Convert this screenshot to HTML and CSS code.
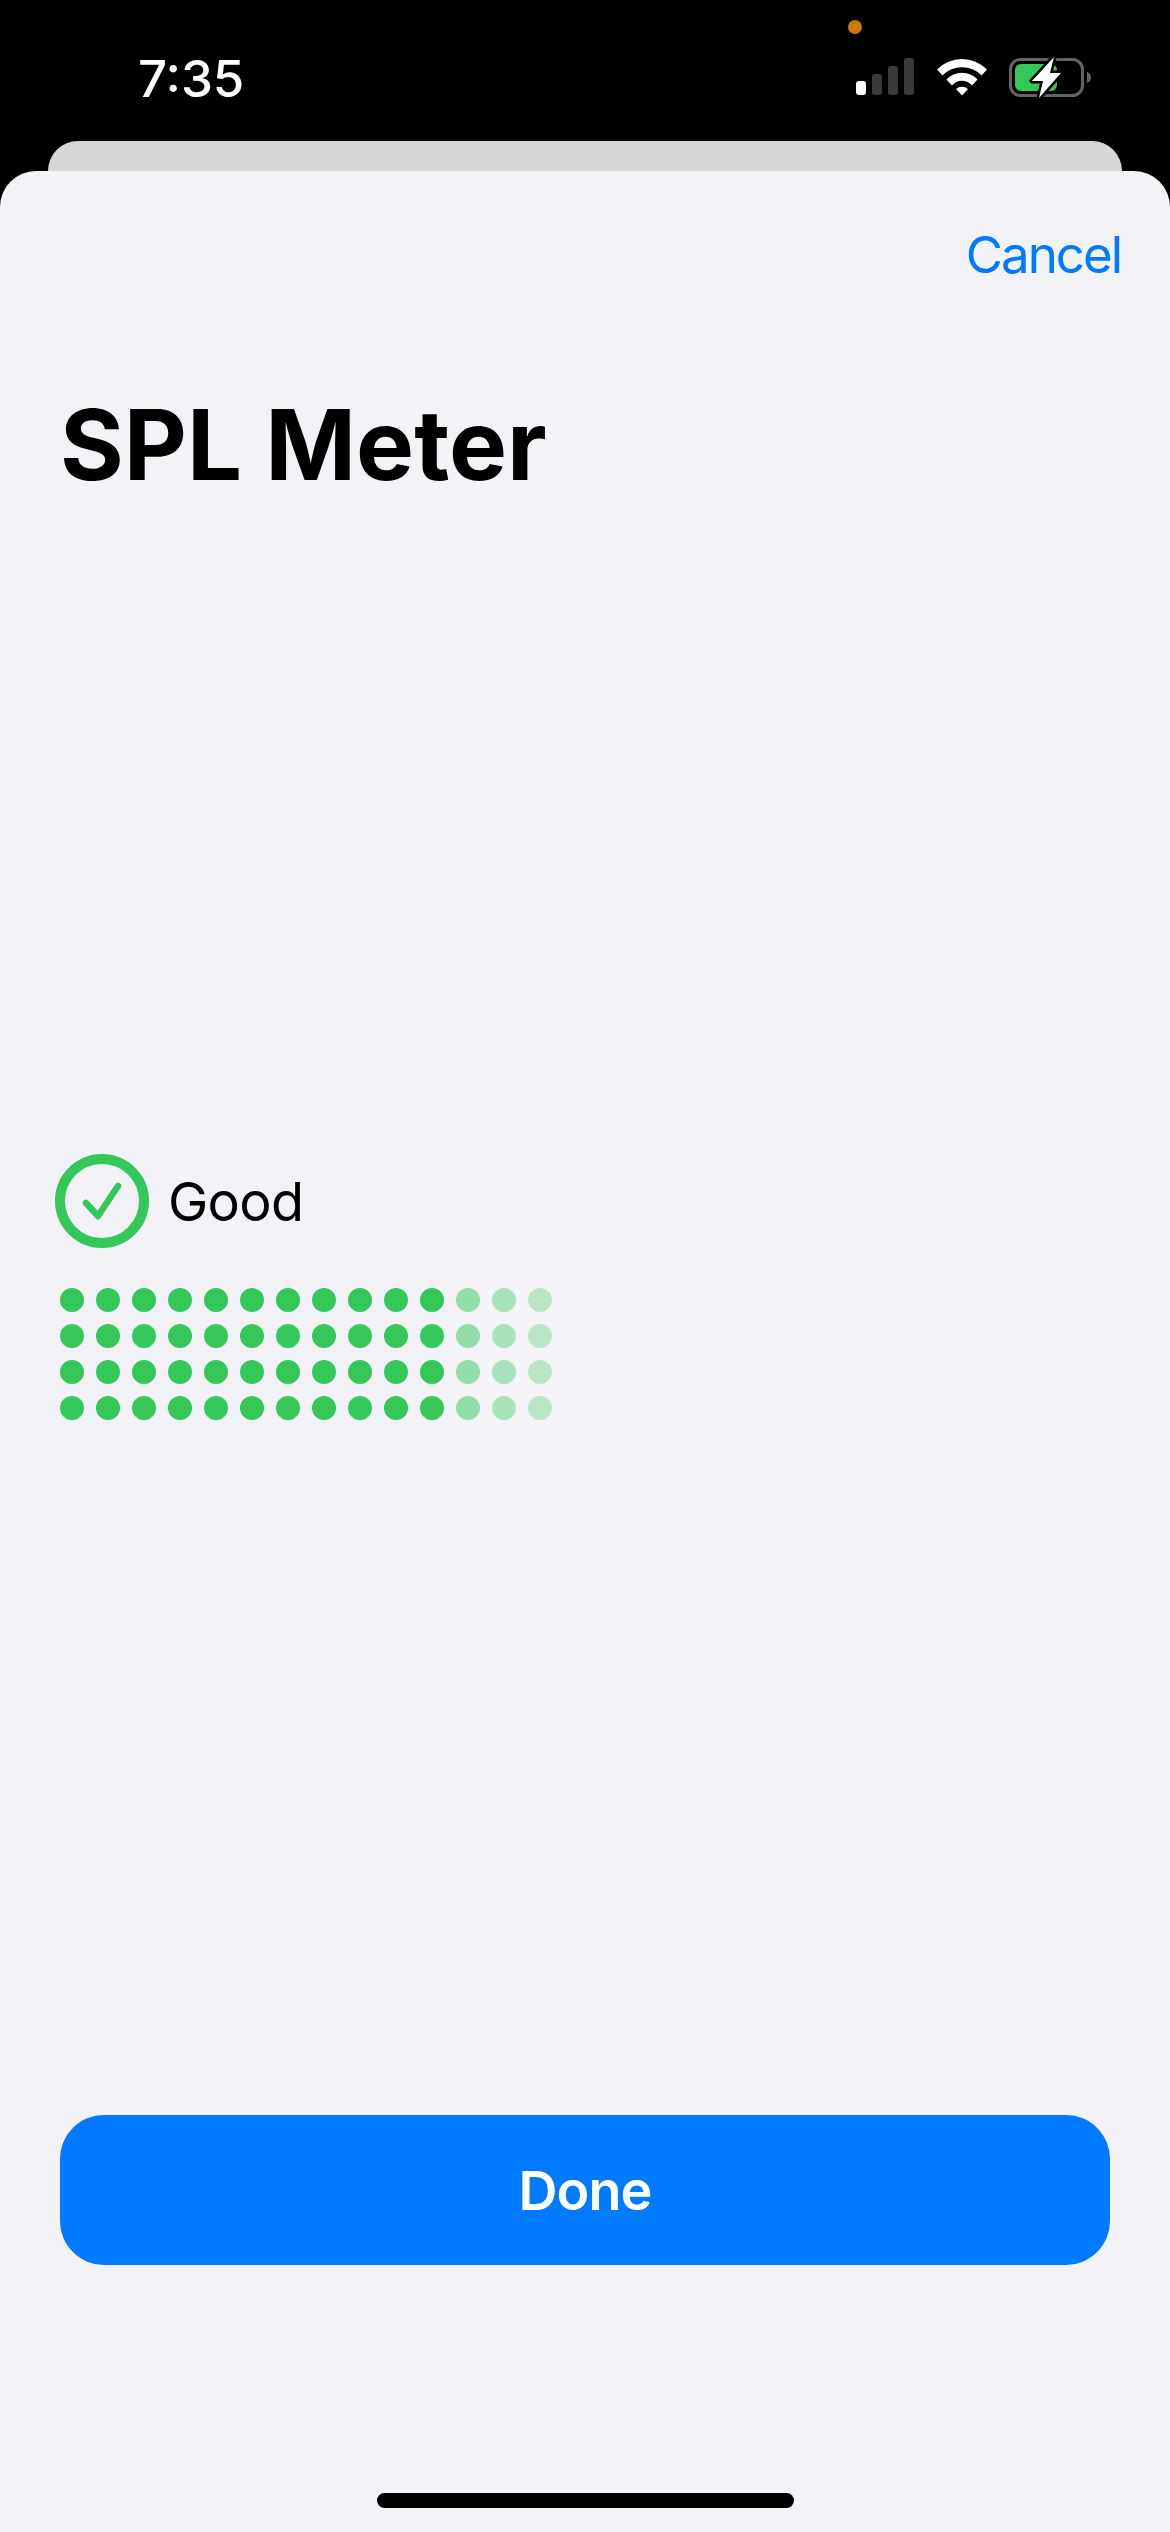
FILE: index.html
```html
<!DOCTYPE html>
<html lang="en">
<head>
	<meta charset="UTF-8">
	<title>SPL Meter</title>
	<link rel="stylesheet" href="styles.css">
</head>
<body>
	<div class="status-bar">
		<span class="time">7:35</span>
		<span class="mic-dot"></span>
		<svg class="status-icons" width="236" height="44" viewBox="0 0 236 44">
			<!-- signal -->
			<rect x="1" y="25" width="10" height="14" rx="3" fill="#fff"/>
			<rect x="17" y="18" width="10" height="21" rx="3" fill="#3a3a3c"/>
			<rect x="33" y="10" width="10" height="29" rx="3" fill="#3a3a3c"/>
			<rect x="49" y="2" width="10" height="37" rx="3" fill="#3a3a3c"/>
			<!-- wifi -->
			<path d="M82 13.500 A35 35 0 0 1 132 13.500 L126.500 19.500 A27 27 0 0 0 87.500 19.500 Z" fill="#fff"/>
			<path d="M91.500 23.500 A21 21 0 0 1 122.500 23.500 L117 29.500 A13 13 0 0 0 97 29.500 Z" fill="#fff"/>
			<path d="M101 33 A9 9 0 0 1 113 33 L107 39.500 Z" fill="#fff"/>
			<!-- battery -->
			<rect x="155.500" y="3.500" width="72" height="36" rx="10" fill="none" stroke="#636366" stroke-width="3"/>
			<rect x="160" y="8" width="42" height="27" rx="6" fill="#34c759"/>
			<path d="M232 16 C235 17 236 19 236 21.500 C236 24 235 26 232 27 Z" fill="#636366"/>
			<path d="M199 1 L177 25 L188 25 L184 42 L206 17 L195 17 Z" fill="#fff" stroke="#000" stroke-width="5" stroke-linejoin="round" paint-order="stroke"/>
		</svg>
	</div>
	<div class="back-sheet"></div>
	<div class="sheet">
		<div class="sheet-top">
			<span class="cancel">Cancel</span>
		</div>
		<h1 class="title">SPL Meter</h1>
		<div class="meter">
			<div class="meter-status">
				<svg class="check" width="94" height="94" viewBox="0 0 94 94">
					<circle cx="47" cy="47" r="42" fill="none" stroke="#34c759" stroke-width="10"/>
					<path d="M31 49 L43 62 L63 32" fill="none" stroke="#34c759" stroke-width="6.500" stroke-linecap="round" stroke-linejoin="round"/>
				</svg>
				<span class="meter-label">Good</span>
			</div>
			<div class="dots">
				<i></i><i></i><i></i><i></i><i></i><i></i><i></i><i></i><i></i><i></i><i></i><i class="fade1"></i><i class="fade2"></i><i class="fade3"></i>
				<i></i><i></i><i></i><i></i><i></i><i></i><i></i><i></i><i></i><i></i><i></i><i class="fade1"></i><i class="fade2"></i><i class="fade3"></i>
				<i></i><i></i><i></i><i></i><i></i><i></i><i></i><i></i><i></i><i></i><i></i><i class="fade1"></i><i class="fade2"></i><i class="fade3"></i>
				<i></i><i></i><i></i><i></i><i></i><i></i><i></i><i></i><i></i><i></i><i></i><i class="fade1"></i><i class="fade2"></i><i class="fade3"></i>
			</div>
		</div>
		<button class="done">Done</button>
		<div class="home-bar"></div>
	</div>
</body>
</html>
```

FILE: styles.css
```css
html, body {
	margin: 0;
	height: 2532px;
	overflow: hidden;
}
body {
	background-color: #000;
	font-family: Inter, "Liberation Sans", sans-serif;
	display: flex;
	flex-direction: column;
	position: relative;
}
.status-bar {
	height: 141px;
	flex: none;
	color: #fff;
	display: flex;
	justify-content: space-between;
	padding: 56px 79px 0 138px;
	box-sizing: border-box;
}
.time {
	font-size: 51px;
	line-height: 46px;
	font-weight: 500;
}
.status-icons {
	display: block;
}
.mic-dot {
	position: absolute;
	left: 848px;
	top: 20px;
	width: 14px;
	height: 14px;
	border-radius: 50%;
	background-color: #c97a00;
}
.back-sheet {
	height: 30px;
	flex: none;
	margin: 0 48px;
	background-color: #d6d6d6;
	border-radius: 36px 36px 0 0;
}
.sheet {
	flex: 1;
	background-color: #f2f2f7;
	border-radius: 36px 36px 0 0;
	display: flex;
	flex-direction: column;
	padding: 0 60px;
}
.sheet-top {
	display: flex;
	justify-content: flex-end;
	padding-top: 53px;
	margin-right: -11px;
}
.cancel {
	color: #007aff;
	font-size: 51px;
	line-height: 62px;
	letter-spacing: -2px;
}
.title {
	margin: 99px 0 0 0;
	font-size: 97.500px;
	line-height: 120px;
	font-weight: 700;
	color: #000;
}
.meter {
	margin-top: 649px;
}
.meter-status {
	display: flex;
	align-items: center;
	gap: 19px;
	margin-left: -5px;
}
.meter-label {
	font-size: 54px;
	color: #000;
	letter-spacing: -0.7px;
}
.dots {
	display: grid;
	grid-template-columns: repeat(14, 24px);
	column-gap: 12px;
	row-gap: 12px;
	margin-top: 40px;
}
.dots i {
	display: block;
	width: 24px;
	height: 24px;
	border-radius: 50%;
	background-color: #34c759;
}
.dots .fade1 {
	background-color: #93dda9;
}
.dots .fade2 {
	background-color: #a8e2ba;
}
.dots .fade3 {
	background-color: #bae6c8;
}
.done {
	margin-top: 695px;
	height: 150px;
	border: 0;
	border-radius: 44px;
	background-color: #007aff;
	color: #fff;
	font-family: inherit;
	font-size: 54px;
	font-weight: 600;
	letter-spacing: -1px;
	padding: 0;
}
.home-bar {
	width: 417px;
	height: 15px;
	margin: 228px auto 0;
	background-color: #000;
	border-radius: 8px;
}
```
